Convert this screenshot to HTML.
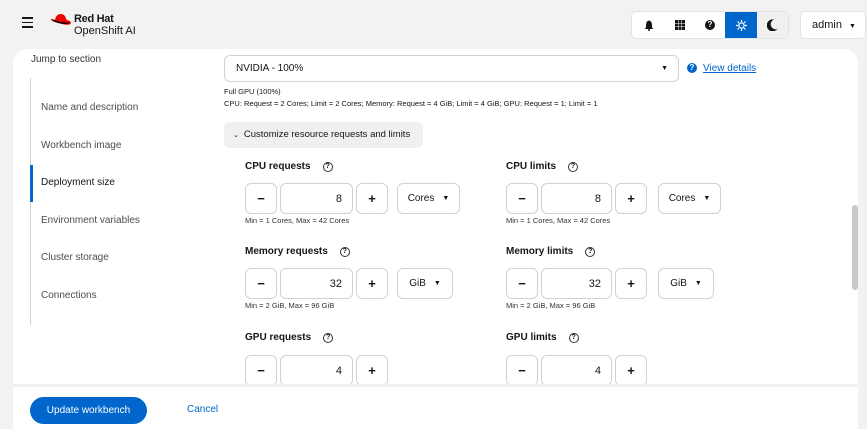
<!DOCTYPE html><html><head><style>
*{box-sizing:border-box;margin:0;padding:0}
body{width:867px;height:424px;overflow:hidden;background:#f2f2f2;font-family:"Liberation Sans",sans-serif;color:#151515;position:relative}
.a{position:absolute}
.card{left:13px;top:49px;width:845px;height:380px;background:#fff;border-radius:14px 14px 0 0}
.nav{font-size:10px;color:#4d4d4d;left:41px}
.btn{border:1px solid #d2d2d2;border-radius:6px;background:#fff;display:flex;align-items:center;justify-content:center;font-size:13px;font-weight:bold}
.inp{border:1px solid #d2d2d2;border-radius:6px;background:#fff;font-size:11px;text-align:right;padding-right:10px;line-height:30px}
.lbl{font-size:10px;font-weight:bold}
.q{display:inline-block;width:10px;height:10px;border:1px solid #333;border-radius:50%;font-size:7px;text-align:center;line-height:8px;margin-left:12px;font-weight:bold;vertical-align:1px}
.help{font-size:7.5px;color:#333}
.unit{border:1px solid #d2d2d2;border-radius:6px;font-size:10px;display:flex;align-items:center;justify-content:center;gap:8px}
.tb{height:28px;top:11px;background:#fff;border-radius:5px;border:1px solid #e4e4e4}
</style></head><body>
<div class="a" style="left:22px;top:17px;width:11px"><div style="height:1.5px;background:#151515;margin-bottom:3px"></div><div style="height:1.5px;background:#151515;margin-bottom:3px"></div><div style="height:1.5px;background:#151515"></div></div>
<svg class="a" style="left:50px;top:12px" width="22" height="15" viewBox="0 0 22 15"><path d="M5 8 Q6 2 11 2 Q15 2 16 7 L17 8 Q21 9 21 11 Q20 14 12 12 Q3 10 1 8 Q0 6 5 8Z" fill="#e00"/><path d="M3 8 Q10 12 19 11" stroke="#000" stroke-width="1.3" fill="none"/></svg>
<div class="a" style="left:74px;top:13px;font-size:11px;font-weight:bold;letter-spacing:-.3px">Red Hat</div>
<div class="a" style="left:74px;top:25px;font-size:11px">OpenShift AI</div>
<div class="a tb" style="left:631px;width:158px;display:flex;overflow:hidden">
<div style="width:33px;display:flex;align-items:center;justify-content:center"><svg width="10" height="11" viewBox="0 0 10 11"><path d="M5 0.5 Q8 1 8 5 L8 7.5 L9.5 9 L0.5 9 L2 7.5 L2 5 Q2 1 5 0.5Z" fill="#151515"/><circle cx="5" cy="10" r="1" fill="#151515"/></svg></div>
<div style="width:30px;display:flex;align-items:center;justify-content:center"><svg width="10" height="10"><g fill="#151515"><rect x="0" y="0" width="3" height="3"/><rect x="3.5" y="0" width="3" height="3"/><rect x="7" y="0" width="3" height="3"/><rect x="0" y="3.5" width="3" height="3"/><rect x="3.5" y="3.5" width="3" height="3"/><rect x="7" y="3.5" width="3" height="3"/><rect x="0" y="7" width="3" height="3"/><rect x="3.5" y="7" width="3" height="3"/><rect x="7" y="7" width="3" height="3"/></g></svg></div>
<div style="width:30px;display:flex;align-items:center;justify-content:center"><span style="width:10px;height:10px;border-radius:50%;background:#151515;color:#fff;font-size:8px;text-align:center;line-height:10px;font-weight:bold">?</span></div>
<div style="width:32px;background:#0066cc;display:flex;align-items:center;justify-content:center"><svg width="11" height="11" viewBox="0 0 11 11"><circle cx="5.5" cy="5.5" r="2.6" fill="none" stroke="#fff" stroke-width="1.3"/><g stroke="#fff" stroke-width="1.2"><path d="M5.5 0v2M5.5 9v2M0 5.5h2M9 5.5h2M1.6 1.6l1.4 1.4M8 8l1.4 1.4M1.6 9.4l1.4-1.4M8 3l1.4-1.4"/></g></svg></div>
<div style="flex:1;background:#f0f0f0;display:flex;align-items:center;justify-content:center"><svg width="11" height="12" viewBox="0 0 11 12"><path d="M7 0.5 A6 6 0 1 0 10.5 10 A5 5 0 0 1 7 0.5Z" fill="#151515"/></svg></div></div>
<div class="a tb" style="left:800px;width:66px;font-size:11px;line-height:26px;padding-left:11px">admin <span style="font-size:7px;margin-left:4px">▼</span></div>
<div class="a card"></div>
<div class="a" style="left:31px;top:54px;font-size:10px;color:#333">Jump to section</div>
<div class="a" style="left:30px;top:78px;width:1px;height:247px;background:#d2d2d2"></div>
<div class="a" style="left:30px;top:165px;width:3px;height:37px;background:#0066cc"></div>
<div class="a nav" style="top:102px">Name and description</div>
<div class="a nav" style="top:140px">Workbench image</div>
<div class="a nav" style="top:177px;color:#151515">Deployment size</div>
<div class="a nav" style="top:215px">Environment variables</div>
<div class="a nav" style="top:252px">Cluster storage</div>
<div class="a nav" style="top:290px">Connections</div>
<div class="a" style="left:224px;top:55px;width:455px;height:27px;border:1px solid #d2d2d2;border-radius:6px;font-size:10px;line-height:25px;padding-left:11px">NVIDIA - 100%<span style="position:absolute;right:10px;font-size:7px">▼</span></div>
<div class="a" style="left:687px;top:63px;width:10px;height:10px;border-radius:50%;background:#0066cc;color:#fff;font-size:8px;text-align:center;line-height:10px;font-weight:bold">?</div>
<div class="a" style="left:703px;top:63px;font-size:10px;color:#0066cc;text-decoration:underline">View details</div>
<div class="a" style="left:224px;top:87px;font-size:7.5px">Full GPU (100%)</div>
<div class="a" style="left:224px;top:99px;font-size:7.5px">CPU: Request = 2 Cores; Limit = 2 Cores; Memory: Request = 4 GiB; Limit = 4 GiB; GPU: Request = 1; Limit = 1</div>
<div class="a" style="left:224px;top:122px;width:199px;height:26px;background:#f0f0f0;border-radius:6px;font-size:9.5px;line-height:26px;padding-left:9px;color:#151515"><span style="font-size:7px;margin-right:5px">⌄</span>Customize resource requests and limits</div>

<div class="a lbl" style="left:245px;top:161px">CPU requests<span class="q">?</span></div>
<div class="a btn" style="left:245px;top:183px;width:32px;height:31px">−</div>
<div class="a inp" style="left:280px;top:183px;width:73px;height:31px">8</div>
<div class="a btn" style="left:356px;top:183px;width:32px;height:31px">+</div>
<div class="a unit" style="left:397px;top:183px;width:63px;height:31px">Cores <span style="font-size:7px">▼</span></div>
<div class="a help" style="left:245px;top:216px">Min = 1 Cores, Max = 42 Cores</div>

<div class="a lbl" style="left:506px;top:161px">CPU limits<span class="q">?</span></div>
<div class="a btn" style="left:506px;top:183px;width:32px;height:31px">−</div>
<div class="a inp" style="left:541px;top:183px;width:71px;height:31px">8</div>
<div class="a btn" style="left:615px;top:183px;width:32px;height:31px">+</div>
<div class="a unit" style="left:658px;top:183px;width:63px;height:31px">Cores <span style="font-size:7px">▼</span></div>
<div class="a help" style="left:506px;top:216px">Min = 1 Cores, Max = 42 Cores</div>

<div class="a lbl" style="left:245px;top:246px">Memory requests<span class="q">?</span></div>
<div class="a btn" style="left:245px;top:268px;width:32px;height:31px">−</div>
<div class="a inp" style="left:280px;top:268px;width:73px;height:31px">32</div>
<div class="a btn" style="left:356px;top:268px;width:32px;height:31px">+</div>
<div class="a unit" style="left:397px;top:268px;width:56px;height:31px">GiB <span style="font-size:7px">▼</span></div>
<div class="a help" style="left:245px;top:301px">Min = 2 GiB, Max = 96 GiB</div>

<div class="a lbl" style="left:506px;top:246px">Memory limits<span class="q">?</span></div>
<div class="a btn" style="left:506px;top:268px;width:32px;height:31px">−</div>
<div class="a inp" style="left:541px;top:268px;width:71px;height:31px">32</div>
<div class="a btn" style="left:615px;top:268px;width:32px;height:31px">+</div>
<div class="a unit" style="left:658px;top:268px;width:56px;height:31px">GiB <span style="font-size:7px">▼</span></div>
<div class="a help" style="left:506px;top:301px">Min = 2 GiB, Max = 96 GiB</div>

<div class="a lbl" style="left:245px;top:332px">GPU requests<span class="q">?</span></div>
<div class="a btn" style="left:245px;top:355px;width:32px;height:31px">−</div>
<div class="a inp" style="left:280px;top:355px;width:73px;height:31px">4</div>
<div class="a btn" style="left:356px;top:355px;width:32px;height:31px">+</div>
<div class="a lbl" style="left:506px;top:332px">GPU limits<span class="q">?</span></div>
<div class="a btn" style="left:506px;top:355px;width:32px;height:31px">−</div>
<div class="a inp" style="left:541px;top:355px;width:71px;height:31px">4</div>
<div class="a btn" style="left:615px;top:355px;width:32px;height:31px">+</div>

<div class="a" style="left:852px;top:205px;width:6px;height:85px;background:#c8c8c8;border-radius:3px"></div>
<div class="a" style="left:13px;top:384px;width:845px;height:40px;background:#fff;border-top:3px solid #f0f0f0"></div>
<div class="a" style="left:30px;top:397px;width:117px;height:27px;background:#0066cc;border-radius:14px;color:#fff;font-size:10px;text-align:center;line-height:27px">Update workbench</div>
<div class="a" style="left:187px;top:404px;font-size:10px;color:#0066cc">Cancel</div>
</body></html>
